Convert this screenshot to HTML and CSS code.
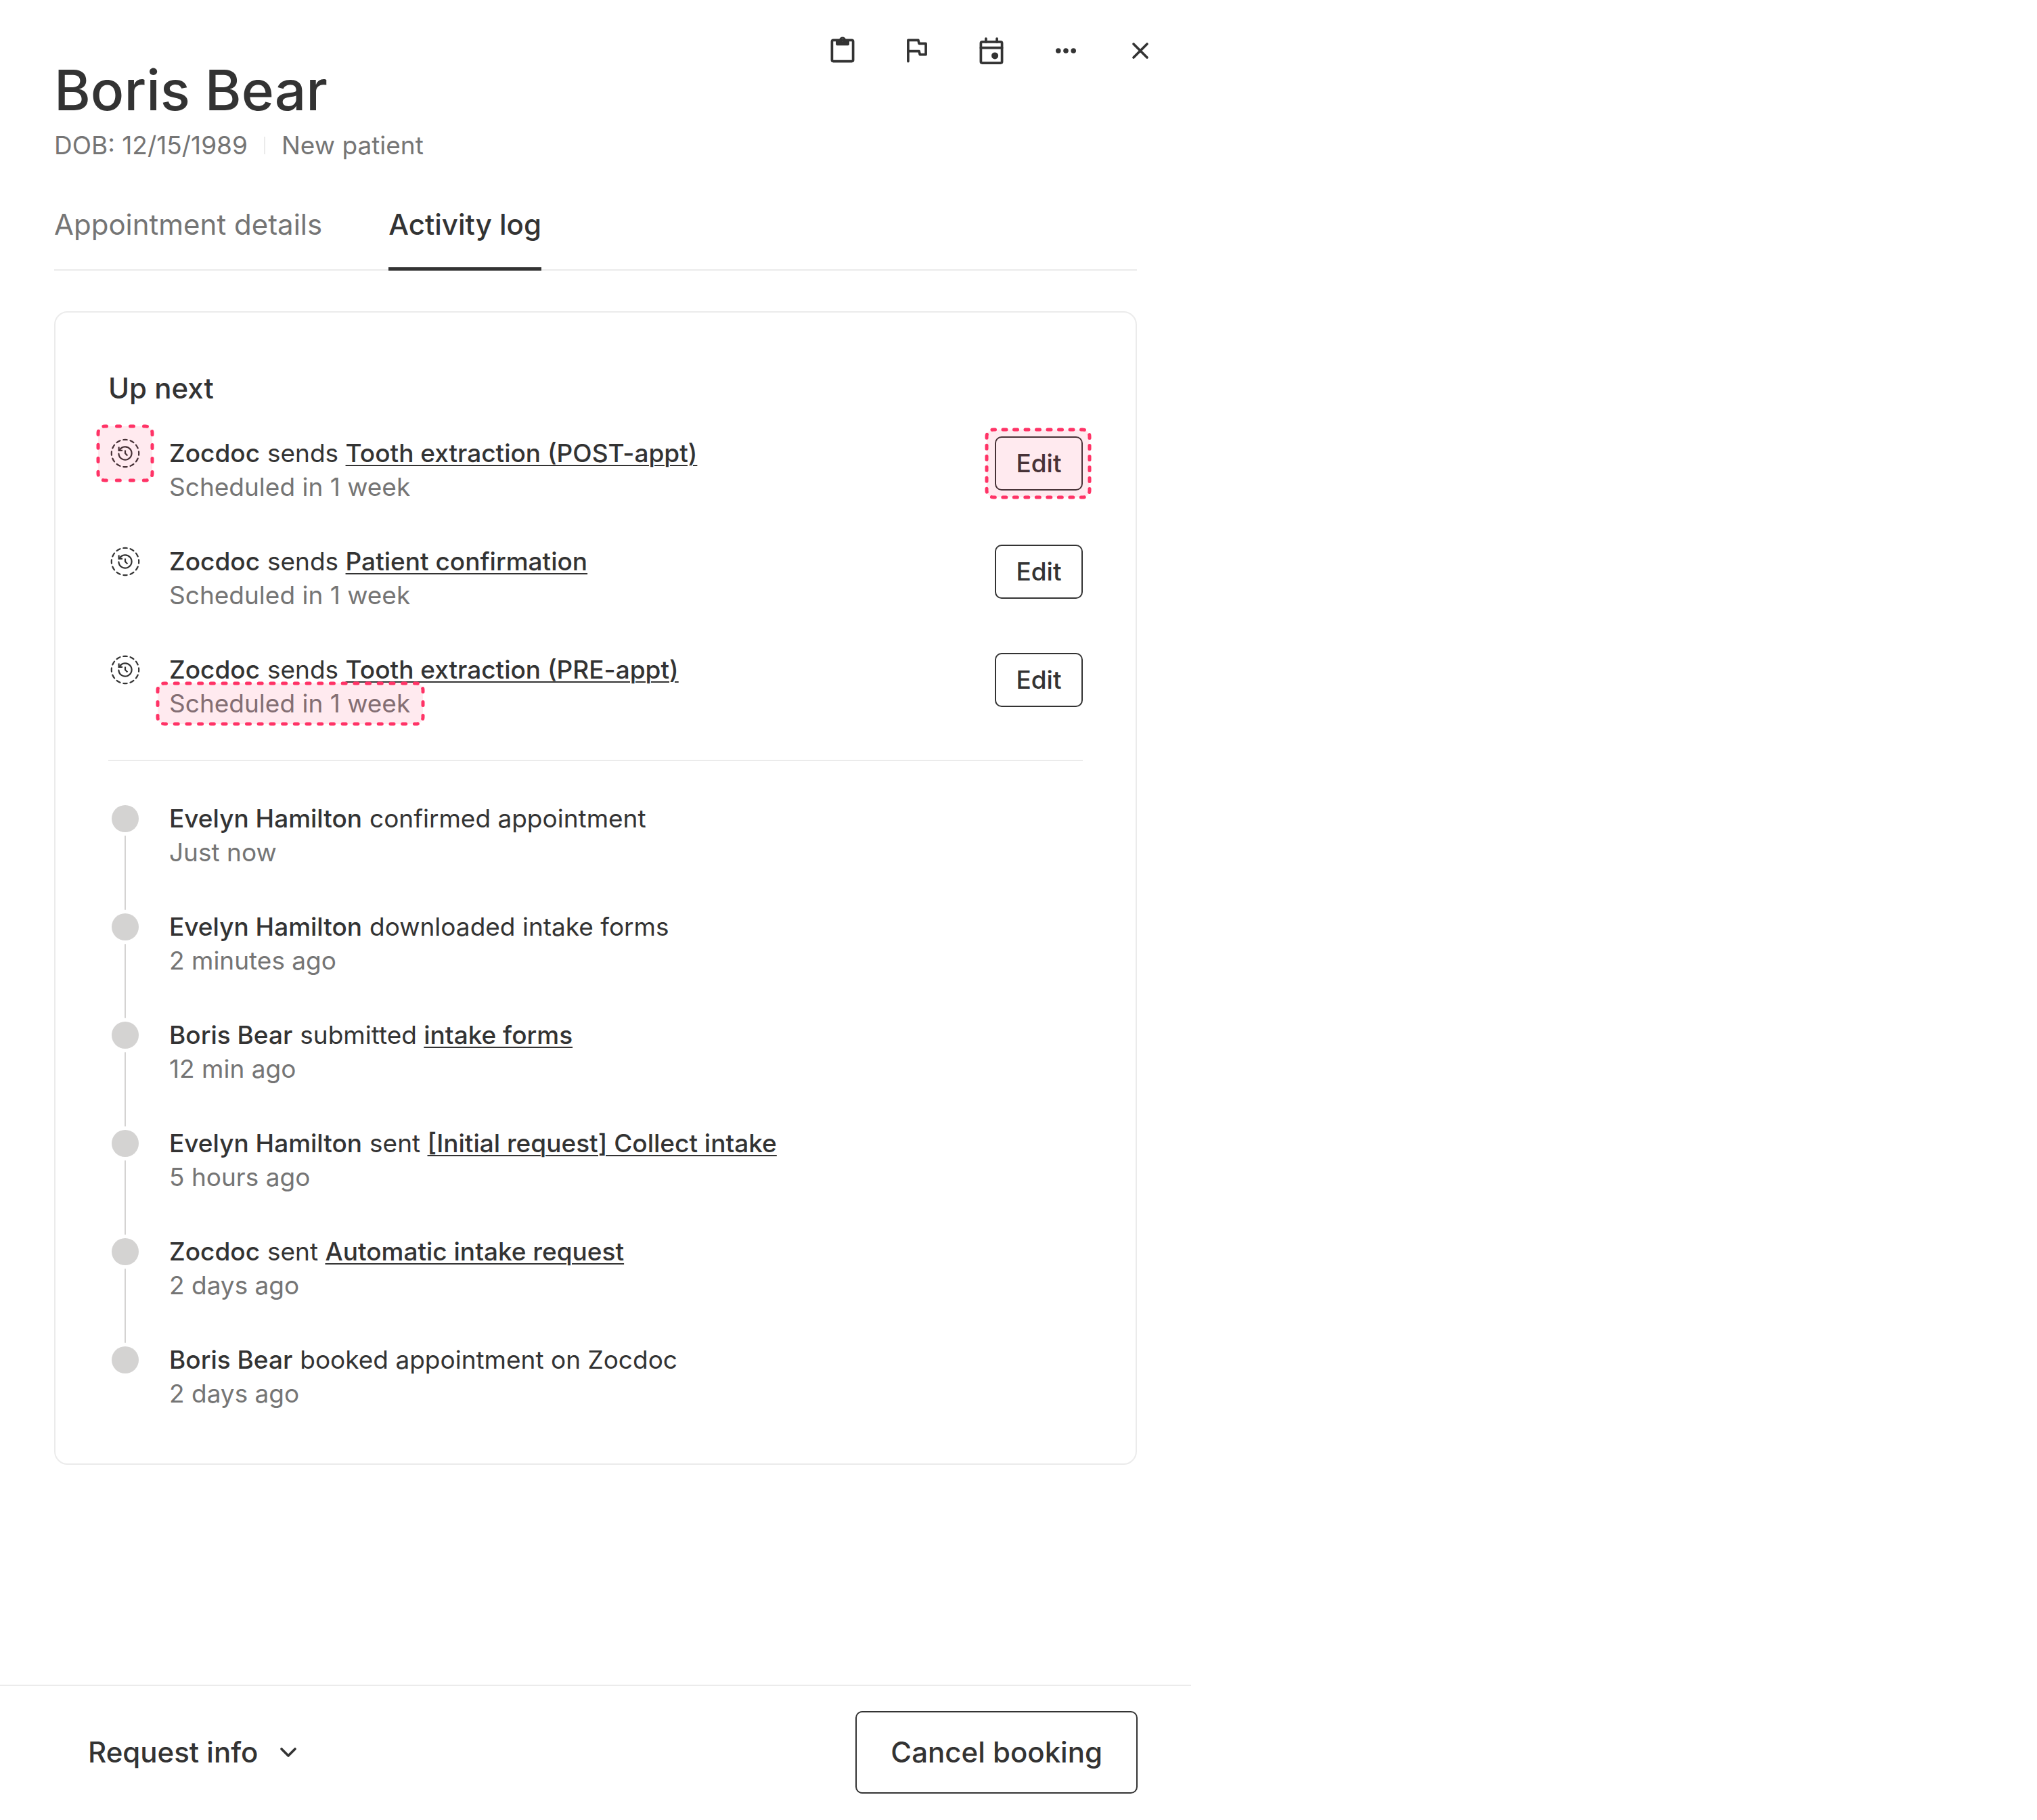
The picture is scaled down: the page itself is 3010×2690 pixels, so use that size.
FILE: index.html
```html
<!DOCTYPE html>
<html lang="en">
<head>
<meta charset="utf-8">
<meta name="viewport" content="width=device-width, initial-scale=1">
<title>Boris Bear – Activity log</title>
<link rel="stylesheet" href="styles.css">
</head>
<body>
<svg class="sprite" aria-hidden="true">
  <symbol id="icon-scheduled" viewBox="0 0 50 50">
    <g fill="none" stroke="currentColor" stroke-width="2.2" stroke-linecap="round" stroke-linejoin="round">
      <circle cx="25" cy="25" r="20.2" pathLength="120" stroke-dasharray="5.4 4.6" stroke-dashoffset="2.7"/>
      <path d="M15.4 25.6a9.6 9.6 0 1 0 1.4-5.6"/>
      <path d="M15.6 15.4v5.4h5.4" stroke-linecap="butt" stroke-linejoin="miter"/>
      <path d="M25 20.6V25l3.4 3.6" stroke-linecap="butt"/>
    </g>
  </symbol>
</svg>

<main class="panel">
  <header class="header">
    <div class="toolbar">
      <button class="icon-button" type="button" aria-label="Notes">
        <svg viewBox="0 0 50 50"><rect x="9.4" y="9.4" width="31.2" height="31.2" rx="2" fill="none" stroke="currentColor" stroke-width="3.7"/><path fill="currentColor" fill-rule="evenodd" d="M15 8h5.2a5 5 0 0 1 9.6 0H35v7.3a2 2 0 0 1-2 2H17a2 2 0 0 1-2-2zM25 7.3a2 2 0 1 0 0 4a2 2 0 1 0 0-4z"/></svg>
      </button>
      <button class="icon-button" type="button" aria-label="Flag">
        <svg viewBox="0 0 50 50"><path fill="none" stroke="currentColor" stroke-width="3.7" stroke-linecap="round" stroke-linejoin="round" d="M11.9 40.6V9.4H26.9L28.1 14.4H38.1V30.6H29.3L28.1 25.6H11.9"/></svg>
      </button>
      <button class="icon-button" type="button" aria-label="Calendar">
        <svg viewBox="0 0 50 50"><g fill="none" stroke="currentColor" stroke-width="3.7" stroke-linecap="round"><rect x="9.4" y="11.9" width="31.2" height="31.2" rx="2"/><path d="M9.4 20.7h31.2M16.9 7v5M33.1 7v5"/></g><circle cx="30.1" cy="32.4" r="5" fill="currentColor"/></svg>
      </button>
      <button class="icon-button" type="button" aria-label="More">
        <svg viewBox="0 0 50 50" fill="currentColor"><circle cx="13.8" cy="25" r="3.8"/><circle cx="25" cy="25" r="3.8"/><circle cx="36.2" cy="25" r="3.8"/></svg>
      </button>
      <button class="icon-button" type="button" aria-label="Close">
        <svg viewBox="0 0 50 50"><path stroke="currentColor" stroke-width="3.7" stroke-linecap="round" d="M15 15l20 20M35 15L15 35"/></svg>
      </button>
    </div>
    <h1 class="name">Boris Bear</h1>
    <p class="meta"><span>DOB: 12/15/1989</span><span class="meta-rule"></span><span>New patient</span></p>
    <div class="tabs" role="tablist">
      <button class="tab" type="button" role="tab" aria-selected="false">Appointment details</button>
      <button class="tab tab-active" type="button" role="tab" aria-selected="true">Activity log</button>
    </div>
  </header>

  <section class="card">
    <h2 class="card-title">Up next</h2>
    <ul class="list">
      <li class="item">
        <span class="marker">
          <svg class="scheduled"><use href="#icon-scheduled"/></svg>
          <svg class="highlight highlight-icon" viewBox="0 0 86 86" aria-hidden="true"><rect x="3" y="3" width="80" height="80" rx="10" stroke-dasharray="5 15 5 15 5 15 5 10.7" stroke-dashoffset="2.5"/></svg>
        </span>
        <div class="text">
          <p class="event"><strong>Zocdoc</strong><span>sends <a href="#">Tooth extraction (POST-appt)</a></span></p>
          <p class="time">Scheduled in 1 week</p>
        </div>
        <span class="action">
          <button class="edit" type="button">Edit</button>
          <svg class="highlight highlight-edit" viewBox="0 0 158 106" aria-hidden="true"><rect x="3" y="3" width="152" height="100" rx="10" stroke-dasharray="5 11.5 5 11.5 5 11.5 5 11.5 5 11.5 5 11.5 5 11.5 5 11.5 5 10.7 5 11 5 11 5 11 5 11 5 11 5 10.7" stroke-dashoffset="2.5"/></svg>
        </span>
      </li>
      <li class="item">
        <span class="marker"><svg class="scheduled"><use href="#icon-scheduled"/></svg></span>
        <div class="text">
          <p class="event"><strong>Zocdoc</strong><span>sends <a href="#">Patient confirmation</a></span></p>
          <p class="time">Scheduled in 1 week</p>
        </div>
        <span class="action"><button class="edit" type="button">Edit</button></span>
      </li>
      <li class="item">
        <span class="marker"><svg class="scheduled"><use href="#icon-scheduled"/></svg></span>
        <div class="text">
          <p class="event"><strong>Zocdoc</strong><span>sends <a href="#">Tooth extraction (PRE-appt)</a></span></p>
          <p class="time">Scheduled in 1 week
            <svg class="highlight highlight-time" viewBox="0 0 398 66" aria-hidden="true"><rect x="3" y="3" width="392" height="60" rx="10" stroke-dasharray="5 12.71 5 12.71 5 12.71 5 12.71 5 12.71 5 12.71 5 12.71 5 12.71 5 12.71 5 12.71 5 12.71 5 12.71 5 12.71 5 12.71 5 12.71 5 12.71 5 12.71 5 12.71 5 12.71 5 12.71 5 12.71 5 10.7 5 15 5 15 5 10.7" stroke-dashoffset="2.5"/></svg>
          </p>
        </div>
        <span class="action"><button class="edit" type="button">Edit</button></span>
      </li>
    </ul>
    <hr class="divider">
    <ol class="list timeline">
      <li class="item">
        <span class="marker"><span class="dot"></span></span>
        <div class="text">
          <p class="event"><strong>Evelyn Hamilton</strong><span>confirmed appointment</span></p>
          <p class="time">Just now</p>
        </div>
      </li>
      <li class="item">
        <span class="marker"><span class="dot"></span></span>
        <div class="text">
          <p class="event"><strong>Evelyn Hamilton</strong><span>downloaded intake forms</span></p>
          <p class="time">2 minutes ago</p>
        </div>
      </li>
      <li class="item">
        <span class="marker"><span class="dot"></span></span>
        <div class="text">
          <p class="event"><strong>Boris Bear</strong><span>submitted <a href="#">intake forms</a></span></p>
          <p class="time">12 min ago</p>
        </div>
      </li>
      <li class="item">
        <span class="marker"><span class="dot"></span></span>
        <div class="text">
          <p class="event"><strong>Evelyn Hamilton</strong><span>sent <a href="#">[Initial request] Collect intake</a></span></p>
          <p class="time">5 hours ago</p>
        </div>
      </li>
      <li class="item">
        <span class="marker"><span class="dot"></span></span>
        <div class="text">
          <p class="event"><strong>Zocdoc</strong><span>sent <a href="#">Automatic intake request</a></span></p>
          <p class="time">2 days ago</p>
        </div>
      </li>
      <li class="item">
        <span class="marker"><span class="dot"></span></span>
        <div class="text">
          <p class="event"><strong>Boris Bear</strong><span>booked appointment on Zocdoc</span></p>
          <p class="time">2 days ago</p>
        </div>
      </li>
    </ol>
  </section>

  <footer class="footer">
    <button class="request" type="button" aria-haspopup="menu">Request info
      <svg class="chevron" viewBox="0 0 30 30"><path fill="none" stroke="currentColor" stroke-width="3.7" stroke-linecap="round" stroke-linejoin="round" d="M5 10l10 10l10-10"/></svg>
    </button>
    <button class="cancel" type="button">Cancel booking</button>
  </footer>
</main>
</body>
</html>
```
FILE: styles.css
```css
:root {
  --ink: #333333;
  --muted: #757575;
  --line: #ebebeb;
  --dot: #d4d3d2;
  --accent: #ff3366;
}

* {
  box-sizing: border-box;
}

body {
  margin: 0;
  background: #ffffff;
  color: var(--ink);
  font-family: Inter, "Open Sans", sans-serif;
  font-size: 37px;
  line-height: 50px;
}

h1,
h2,
p,
ul,
ol {
  margin: 0;
  padding: 0;
  font-weight: 500;
}

button {
  margin: 0;
  padding: 0;
  border: 0;
  background: none;
  color: inherit;
  font: inherit;
  cursor: pointer;
}

.sprite {
  position: absolute;
  width: 0;
  height: 0;
}

.panel {
  display: flex;
  flex-direction: column;
  max-width: 1760px;
  min-height: 100vh;
}

/* Header */

.header {
  position: relative;
  padding: 80px 80px 0;
}

.toolbar {
  position: absolute;
  top: 50px;
  right: 50px;
  display: flex;
  gap: 60px;
}

.icon-button {
  width: 50px;
  height: 50px;
}

.icon-button svg {
  display: block;
}

.name {
  font-size: 82px;
  line-height: 108px;
}

.meta {
  display: flex;
  align-items: center;
  gap: 24px;
  margin-top: 2px;
  color: var(--muted);
  font-weight: 400;
}

.meta-rule {
  width: 2px;
  height: 26px;
  background: var(--line);
}

.tabs {
  display: flex;
  gap: 98px;
  margin-top: 62px;
  box-shadow: inset 0 -2px var(--line);
}

.tab {
  padding-bottom: 33px;
  border-bottom: 5px solid transparent;
  color: var(--muted);
  font-size: 42px;
  line-height: 60px;
}

.tab-active {
  border-color: var(--ink);
  color: var(--ink);
  font-weight: 500;
}

/* Activity card */

.card {
  margin: 60px 80px;
  padding: 78px;
  border: 2px solid var(--line);
  border-radius: 20px;
}

.card-title {
  padding-top: 4px;
  margin-bottom: 41px;
  font-size: 42px;
  line-height: 60px;
}

.list {
  display: flex;
  flex-direction: column;
  gap: 60px;
  list-style: none;
}

.item {
  display: flex;
}

.marker {
  position: relative;
  flex: none;
  width: 50px;
  margin-right: 40px;
}

.scheduled {
  display: block;
  width: 50px;
  height: 50px;
}

.text {
  flex: 1;
}

.event {
  display: flex;
  gap: 11px;
  font-weight: 400;
}

.event strong,
.event a {
  color: inherit;
  font-weight: 500;
}

.event a {
  text-decoration-thickness: 2px;
  text-underline-offset: 4px;
}

.time {
  position: relative;
  color: var(--muted);
  font-weight: 400;
}

.action {
  position: relative;
  align-self: flex-start;
}

.edit {
  display: block;
  width: 130px;
  height: 80px;
  border: 2px solid var(--ink);
  border-radius: 10px;
  font-weight: 500;
}

.divider {
  width: 100%;
  height: 2px;
  margin: 58px 0 60px;
  border: 0;
  background: var(--line);
}

.timeline .marker {
  display: flex;
  justify-content: center;
}

.dot {
  width: 40px;
  height: 40px;
  margin-top: 5px;
  border-radius: 50%;
  background: var(--dot);
}

.timeline .item:not(:last-child) .marker::after {
  content: "";
  position: absolute;
  top: 50px;
  bottom: -60px;
  left: 24px;
  width: 2px;
  border-radius: 1px;
  background: var(--dot);
}

/* Callout outlines over the highlighted controls */

.highlight {
  position: absolute;
  fill: rgba(255, 51, 102, 0.1);
  stroke: var(--accent);
  stroke-width: 5px;
  stroke-linecap: round;
  pointer-events: none;
}

.highlight-icon {
  top: -18px;
  left: -18px;
  width: 86px;
  height: 86px;
}

.highlight-edit {
  top: -13px;
  left: -15px;
  width: 158px;
  height: 106px;
}

.highlight-time {
  top: -8px;
  left: -20px;
  width: 398px;
  height: 66px;
}

/* Footer */

.footer {
  display: flex;
  justify-content: space-between;
  margin-top: auto;
  padding: 37px 79px 39px 130px;
  border-top: 2px solid var(--line);
  font-size: 42px;
  font-weight: 500;
}

.request {
  display: flex;
  align-items: center;
  gap: 30px;
}

.chevron {
  width: 30px;
  height: 30px;
}

.cancel {
  padding: 32px 50px;
  border: 2px solid var(--ink);
  border-radius: 10px;
  line-height: 54px;
}
```
